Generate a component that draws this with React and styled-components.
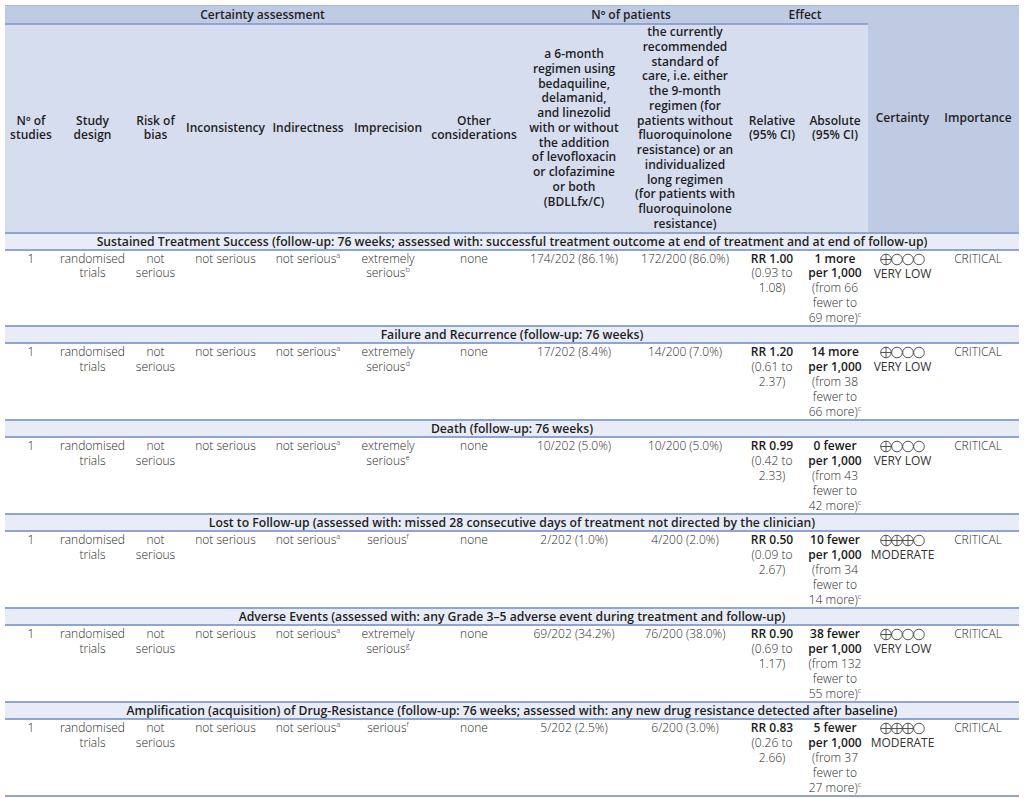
import React from "react";
import styled, { createGlobalStyle } from "styled-components";

const Global = createGlobalStyle`
  html, body { margin: 0; padding: 0; background: #fff; }
  body { font-family: "Open Sans", "Noto Sans", sans-serif; color: #222; }
`;

const Page = styled.div`
  padding: 5px 5px 0 5px;
`;

const Table = styled.table`
  width: 1014px;
  table-layout: fixed;
  border-collapse: collapse;
  font-size: 12px;
  border-top: 1px solid #a9b7d9;
`;

const Col = styled.col`
  width: ${(p) => p.$w}px;
`;

const GroupTh = styled.th`
  background: #bfcae3;
  font-weight: 600;
  color: #1f1f1f;
  line-height: 17px;
  padding: 0 2px;
  text-align: center;
  vertical-align: middle;
  white-space: nowrap;
  border-bottom: 2px solid #8fa4d0;
`;

const HeadTh = styled.th`
  background: ${(p) => (p.$dark ? "#bfcae3" : "#d6ddef")};
  font-weight: 600;
  color: #1f1f1f;
  line-height: 14.75px;
  padding: 0 1px;
  text-align: center;
  vertical-align: middle;
  white-space: nowrap;
  border-bottom: 2px solid #8fa4d0;
`;

const TitleCell = styled.td`
  background: #e8ecf6;
  font-weight: 600;
  font-size: 12.2px;
  color: #1f1f1f;
  line-height: 15px;
  padding: 0;
  text-align: center;
  white-space: nowrap;
  border-bottom: 2px solid #8fa4d0;
`;

const Td = styled.td`
  font-weight: 300;
  color: #2a2a2a;
  line-height: 14.8px;
  padding: 1px 1px 0;
  text-align: center;
  vertical-align: top;
  white-space: nowrap;
  border-bottom: 2px solid #8fa4d0;
`;

const Strong = styled.span`
  font-weight: 600;
  color: #1a1a1a;
`;

const Sup = styled.sup`
  font-size: 7.5px;
  line-height: 0;
  vertical-align: 5px;
`;

const Rating = styled.svg`
  display: block;
  margin: 1px auto 1px;
`;

const Level = styled.div`
  font-weight: 400;
  font-size: 12px;
  color: #333;
`;

function Symbols({ filled }) {
  const items = [0, 1, 2, 3];
  return (
    <Rating width="46" height="13" viewBox="0 0 46 13">
      {items.map((i) => {
        const cx = 6 + i * 11;
        return (
          <g key={i} stroke="#444" strokeWidth="0.9" fill="none">
            <circle cx={cx} cy="6.5" r="5.3" />
            {i < filled && (
              <>
                <line x1={cx - 5.3} y1="6.5" x2={cx + 5.3} y2="6.5" />
                <line x1={cx} y1="1.2" x2={cx} y2="11.8" />
              </>
            )}
          </g>
        );
      })}
    </Rating>
  );
}

const widths = [52, 71, 55, 85, 80, 80, 92, 108, 114, 60, 66, 69, 82];

const outcomes = [
  {
    title:
      "Sustained Treatment Success (follow-up: 76 weeks; assessed with: successful treatment outcome at end of treatment and at end of follow-up)",
    imp: ["extremely", "serious", "b"],
    i1: "174/202 (86.1%)",
    i2: "172/200 (86.0%)",
    rr: "RR 1.00",
    ci: ["(0.93 to", "1.08)"],
    abs: ["1 more", "per 1,000"],
    absCi: ["(from 66", "fewer to", "69 more)"],
    filled: 1,
    level: "VERY LOW",
  },
  {
    title: "Failure and Recurrence (follow-up: 76 weeks)",
    imp: ["extremely", "serious", "d"],
    i1: "17/202 (8.4%)",
    i2: "14/200 (7.0%)",
    rr: "RR 1.20",
    ci: ["(0.61 to", "2.37)"],
    abs: ["14 more", "per 1,000"],
    absCi: ["(from 38", "fewer to", "66 more)"],
    filled: 1,
    level: "VERY LOW",
  },
  {
    title: "Death (follow-up: 76 weeks)",
    imp: ["extremely", "serious", "e"],
    i1: "10/202 (5.0%)",
    i2: "10/200 (5.0%)",
    rr: "RR 0.99",
    ci: ["(0.42 to", "2.33)"],
    abs: ["0 fewer", "per 1,000"],
    absCi: ["(from 43", "fewer to", "42 more)"],
    filled: 1,
    level: "VERY LOW",
  },
  {
    title:
      "Lost to Follow-up (assessed with: missed 28 consecutive days of treatment not directed by the clinician)",
    imp: [null, "serious", "f"],
    i1: "2/202 (1.0%)",
    i2: "4/200 (2.0%)",
    rr: "RR 0.50",
    ci: ["(0.09 to", "2.67)"],
    abs: ["10 fewer", "per 1,000"],
    absCi: ["(from 34", "fewer to", "14 more)"],
    filled: 3,
    level: "MODERATE",
  },
  {
    title:
      "Adverse Events (assessed with: any Grade 3\u20135 adverse event during treatment and follow-up)",
    imp: ["extremely", "serious", "g"],
    i1: "69/202 (34.2%)",
    i2: "76/200 (38.0%)",
    rr: "RR 0.90",
    ci: ["(0.69 to", "1.17)"],
    abs: ["38 fewer", "per 1,000"],
    absCi: ["(from 132", "fewer to", "55 more)"],
    filled: 1,
    level: "VERY LOW",
  },
  {
    title:
      "Amplification (acquisition) of Drug-Resistance (follow-up: 76 weeks; assessed with: any new drug resistance detected after baseline)",
    imp: [null, "serious", "f"],
    i1: "5/202 (2.5%)",
    i2: "6/200 (3.0%)",
    rr: "RR 0.83",
    ci: ["(0.26 to", "2.66)"],
    abs: ["5 fewer", "per 1,000"],
    absCi: ["(from 37", "fewer to", "27 more)"],
    filled: 3,
    level: "MODERATE",
  },
];

function Lines({ lines }) {
  return lines.map((l, i) => (
    <React.Fragment key={i}>
      {i > 0 && <br />}
      {l}
    </React.Fragment>
  ));
}

function OutcomeRows({ o }) {
  return (
    <>
      <tr>
        <TitleCell colSpan={13}>{o.title}</TitleCell>
      </tr>
      <tr>
        <Td>1</Td>
        <Td>
          randomised
          <br />
          trials
        </Td>
        <Td>
          not
          <br />
          serious
        </Td>
        <Td>not serious</Td>
        <Td>
          not serious<Sup>a</Sup>
        </Td>
        <Td>
          {o.imp[0] && (
            <>
              {o.imp[0]}
              <br />
            </>
          )}
          {o.imp[1]}
          <Sup>{o.imp[2]}</Sup>
        </Td>
        <Td>none</Td>
        <Td>{o.i1}</Td>
        <Td>{o.i2}</Td>
        <Td>
          <Strong>{o.rr}</Strong>
          <br />
          <Lines lines={o.ci} />
        </Td>
        <Td>
          <Strong>
            <Lines lines={o.abs} />
          </Strong>
          <br />
          <Lines lines={o.absCi} />
          <Sup>c</Sup>
        </Td>
        <Td>
          <Symbols filled={o.filled} />
          <Level>{o.level}</Level>
        </Td>
        <Td>CRITICAL</Td>
      </tr>
    </>
  );
}

export default function App() {
  return (
    <Page>
      <Global />
      <Table>
        <colgroup>
          {widths.map((w, i) => (
            <Col key={i} $w={w} />
          ))}
        </colgroup>
        <thead>
          <tr>
            <GroupTh colSpan={7}>Certainty assessment</GroupTh>
            <GroupTh colSpan={2}>Nº of patients</GroupTh>
            <GroupTh colSpan={2}>Effect</GroupTh>
            <HeadTh rowSpan={2} $dark>
              Certainty
            </HeadTh>
            <HeadTh rowSpan={2} $dark>
              Importance
            </HeadTh>
          </tr>
          <tr>
            <HeadTh>
              Nº of
              <br />
              studies
            </HeadTh>
            <HeadTh>
              Study
              <br />
              design
            </HeadTh>
            <HeadTh>
              Risk of
              <br />
              bias
            </HeadTh>
            <HeadTh>Inconsistency</HeadTh>
            <HeadTh>Indirectness</HeadTh>
            <HeadTh>Imprecision</HeadTh>
            <HeadTh>
              Other
              <br />
              considerations
            </HeadTh>
            <HeadTh>
              <Lines
                lines={[
                  "a 6-month",
                  "regimen using",
                  "bedaquiline,",
                  "delamanid,",
                  "and linezolid",
                  "with or without",
                  "the addition",
                  "of levofloxacin",
                  "or clofazimine",
                  "or both",
                  "(BDLLfx/C)",
                ]}
              />
            </HeadTh>
            <HeadTh>
              <Lines
                lines={[
                  "the currently",
                  "recommended",
                  "standard of",
                  "care, i.e. either",
                  "the 9-month",
                  "regimen (for",
                  "patients without",
                  "fluoroquinolone",
                  "resistance) or an",
                  "individualized",
                  "long regimen",
                  "(for patients with",
                  "fluoroquinolone",
                  "resistance)",
                ]}
              />
            </HeadTh>
            <HeadTh>
              Relative
              <br />
              (95% CI)
            </HeadTh>
            <HeadTh>
              Absolute
              <br />
              (95% CI)
            </HeadTh>
          </tr>
        </thead>
        <tbody>
          {outcomes.map((o, i) => (
            <OutcomeRows key={i} o={o} />
          ))}
        </tbody>
      </Table>
    </Page>
  );
}
